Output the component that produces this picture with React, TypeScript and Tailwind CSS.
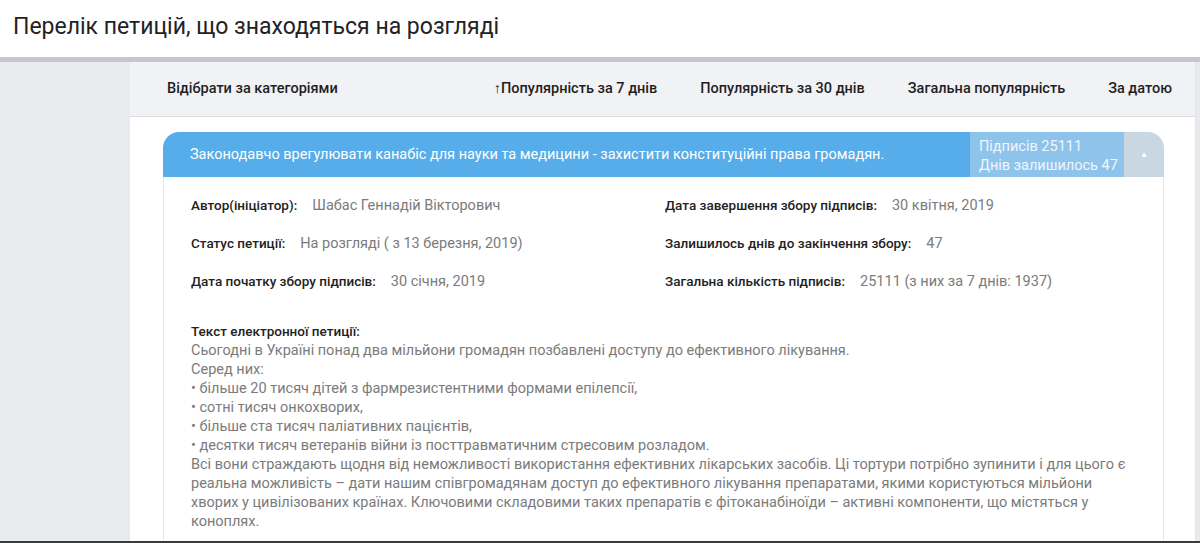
import React from "react";

const Row = ({ label, value }: { label: string; value: string }) => (
  <div className="flex items-baseline h-[20px] leading-[20px] whitespace-nowrap">
    <span className="font-medium text-[13.5px] text-[#222]">{label}</span>
    <span className="ml-[15px] text-[#7b7b7b]">{value}</span>
  </div>
);

export default function App() {
  return (
    <div className="relative h-[543px] overflow-hidden bg-white font-['Roboto',sans-serif] text-[14.5px]">
      <div className="h-[57px] pl-[13px] flex items-center text-[23px] text-[#222] pb-[2px]">
        Перелік петицій, що знаходяться на розгляді
      </div>
      <div className="h-[5px] bg-[#c4c7cf]" />
      <div className="flex bg-[#e9eaee] h-full">
        <div className="w-[130px] shrink-0" />
        <div className="flex-1 bg-white mr-[4px] border-r border-[#e3e4e8]">
          <nav className="h-[55px] bg-[#f1f2f5] border-b border-[#dcdde1] flex items-center pl-[37px] pr-[23px] font-medium text-[#1f1f1f] whitespace-nowrap">
            <span>Відібрати за категоріями</span>
            <div className="ml-auto flex gap-[43px]">
              <span>↑Популярність за 7 днів</span>
              <span>Популярність за 30 днів</span>
              <span>Загальна популярність</span>
              <span>За датою</span>
            </div>
          </nav>
          <div className="ml-[33px] mr-[31px] mt-[15px]">
            <div className="flex h-[45px] rounded-t-[16px] overflow-hidden">
              <div className="flex-1 bg-[#56ade9] pl-[27px] flex items-center text-white whitespace-nowrap">
                Законодавчо врегулювати канабіс для науки та медицини - захистити конституційні права громадян.
              </div>
              <div className="w-[154px] bg-[#8ec4eb] pl-[9px] pt-[2px] flex flex-col justify-center leading-[19px] text-[#eef6fd] whitespace-nowrap">
                <span>Підписів 25111</span>
                <span>Днів залишилось 47</span>
              </div>
              <div className="w-[40px] bg-[#c9d7e2] flex items-center justify-center text-white text-[8px]">
                ▲
              </div>
            </div>
            <div className="border-x border-[#e6e7ea] px-[27px] pt-[18px] pb-[20px]">
              <div className="grid grid-cols-[474px_1fr] gap-y-[18px]">
                <Row label="Автор(ініціатор):" value="Шабас Геннадій Вікторович" />
                <Row label="Дата завершення збору підписів:" value="30 квітня, 2019" />
                <Row label="Статус петиції:" value="На розгляді ( з 13 березня, 2019)" />
                <Row label="Залишилось днів до закінчення збору:" value="47" />
                <Row label="Дата початку збору підписів:" value="30 січня, 2019" />
                <Row label="Загальна кількість підписів:" value="25111 (з них за 7 днів: 1937)" />
              </div>
              <div className="mt-[31px] leading-[19px] text-[#7b7b7b] whitespace-nowrap">
                <div className="font-medium text-[13.5px] text-[#222]">Текст електронної петиції:</div>
                <div>Сьогодні в Україні понад два мільйони громадян позбавлені доступу до ефективного лікування.</div>
                <div>Серед них:</div>
                <div>• більше 20 тисяч дітей з фармрезистентними формами епілепсії,</div>
                <div>• сотні тисяч онкохворих,</div>
                <div>• більше ста тисяч паліативних пацієнтів,</div>
                <div>• десятки тисяч ветеранів війни із посттравматичним стресовим розладом.</div>
                <div>Всі вони страждають щодня від неможливості використання ефективних лікарських засобів. Ці тортури потрібно зупинити і для цього є</div>
                <div>реальна можливість – дати нашим співгромадянам доступ до ефективного лікування препаратами, якими користуються мільйони</div>
                <div>хворих у цивілізованих країнах. Ключовими складовими таких препаратів є фітоканабіноїди – активні компоненти, що містяться у</div>
                <div>коноплях.</div>
              </div>
            </div>
          </div>
        </div>
      </div>
      <div className="absolute bottom-0 left-0 right-0 h-[2px] bg-[#3a3a3a]" />
    </div>
  );
}
